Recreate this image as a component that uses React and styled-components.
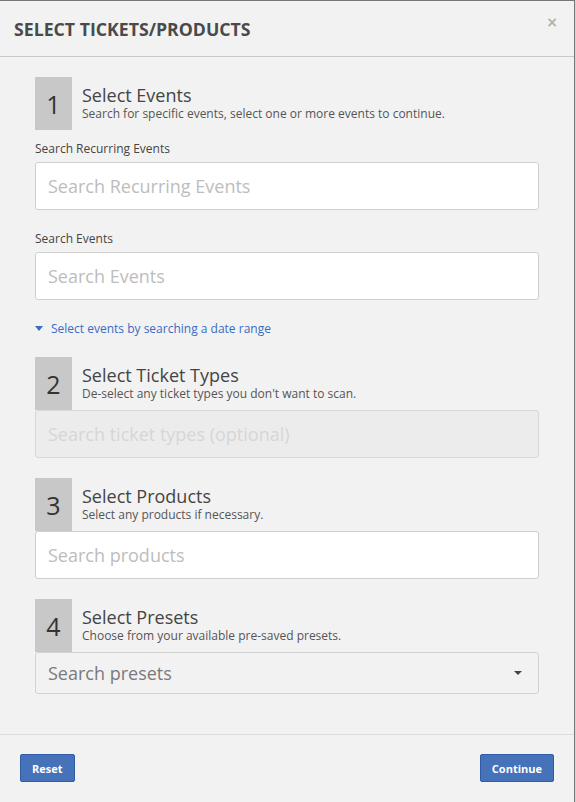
import React from "react";
import styled, { createGlobalStyle } from "styled-components";

const GlobalStyle = createGlobalStyle`
  html, body {
    margin: 0;
    padding: 0;
    background: #d4d4d4;
    font-family: "Open Sans", "Liberation Sans", sans-serif;
  }
  * {
    box-sizing: border-box;
  }
`;

const Modal = styled.div`
  width: 575px;
  min-height: 802px;
  background: #f2f2f2;
  border-top: 1px solid #777;
  border-right: 1px solid #777;
  display: flex;
  flex-direction: column;
`;

const Header = styled.div`
  height: 56px;
  padding: 0 14px;
  border-bottom: 1px solid #c9c9c9;
  display: flex;
  align-items: center;
  justify-content: space-between;
`;

const Title = styled.h4`
  margin: 0;
  font-size: 17.7px;
  font-weight: 700;
  color: #4a4a4a;
  text-transform: uppercase;
`;

const Close = styled.button`
  align-self: flex-start;
  margin-top: 14px;
  margin-right: 2px;
  padding: 0;
  border: none;
  background: none;
  font-family: "DejaVu Sans", sans-serif;
  font-size: 14px;
  font-weight: 700;
  color: #b0b0b0;
  line-height: 1;
  cursor: pointer;
`;

const Body = styled.div`
  flex: 1;
  padding: 20px 35px 40px;
`;

const StepHeader = styled.div`
  display: flex;
  height: 53px;
  margin-bottom: ${(p) => (p.$gap ? "10px" : "0")};
`;

const StepNumber = styled.div`
  width: 37px;
  background: #c8c8c8;
  color: #333;
  font-size: 25px;
  display: flex;
  align-items: center;
  justify-content: center;
`;

const StepText = styled.div`
  padding: 7px 0 0 10px;
`;

const StepTitle = styled.div`
  font-size: 18px;
  line-height: 22px;
  color: #444;
`;

const StepSub = styled.div`
  font-size: 12px;
  line-height: 16px;
  color: #555;
`;

const Label = styled.label`
  display: block;
  font-size: 12px;
  line-height: 17px;
  color: #444;
  margin-bottom: 5px;
`;

const Field = styled.div`
  margin-bottom: ${(p) => p.$mb || "0"};
`;

const Input = styled.input`
  display: block;
  width: 100%;
  height: 48px;
  padding: 0 12px;
  font-family: inherit;
  font-size: 18px;
  color: #333;
  background: ${(p) => (p.disabled ? "#ececec" : "#fff")};
  border: 1px solid ${(p) => (p.disabled ? "#d8d8d8" : "#cfcfcf")};
  border-radius: 3px;
  outline: none;

  &::placeholder {
    color: ${(p) => (p.disabled ? "#d6d6d6" : "#bdbdbd")};
  }
`;

const SelectBox = styled.div`
  height: 42px;
  padding: 0 12px;
  display: flex;
  align-items: center;
  justify-content: space-between;
  border: 1px solid #d2d2d2;
  border-radius: 3px;
  font-size: 18px;
  color: #7a7a7a;
`;

const Caret = styled.span`
  width: 0;
  height: 0;
  margin-right: 4px;
  border-left: 4px solid transparent;
  border-right: 4px solid transparent;
  border-top: 4px solid #444;
`;

const Toggle = styled.a`
  display: flex;
  align-items: center;
  gap: 8px;
  margin: 20px 0;
  font-size: 12px;
  line-height: 17px;
  color: #3a6cc4;
  cursor: pointer;
`;

const BlueCaret = styled.span`
  width: 0;
  height: 0;
  border-left: 4px solid transparent;
  border-right: 4px solid transparent;
  border-top: 5px solid #3a6cc4;
`;

const Step = styled.div`
  margin-bottom: ${(p) => p.$mb || "20px"};
`;

const Footer = styled.div`
  border-top: 1px solid #dcdcdc;
  padding: 19px 20px 20px;
  display: flex;
  justify-content: space-between;
`;

const Button = styled.button`
  height: 28px;
  padding: 0 11px;
  font-family: inherit;
  font-size: 11px;
  font-weight: 700;
  color: #fff;
  background: #4572b9;
  border: 1px solid #2f5ca6;
  border-radius: 2px;
  cursor: pointer;
`;

const StepHead = ({ n, title, sub, gap }) => (
  <StepHeader $gap={gap}>
    <StepNumber>{n}</StepNumber>
    <StepText>
      <StepTitle>{title}</StepTitle>
      <StepSub>{sub}</StepSub>
    </StepText>
  </StepHeader>
);

export default function App() {
  return (
    <>
      <GlobalStyle />
      <Modal>
        <Header>
          <Title>Select Tickets/Products</Title>
          <Close aria-label="Close">×</Close>
        </Header>
        <Body>
          <StepHead
            n="1"
            title="Select Events"
            sub="Search for specific events, select one or more events to continue."
            gap
          />
          <Field $mb="20px">
            <Label>Search Recurring Events</Label>
            <Input placeholder="Search Recurring Events" />
          </Field>
          <Field>
            <Label>Search Events</Label>
            <Input placeholder="Search Events" />
          </Field>
          <Toggle>
            <BlueCaret />
            Select events by searching a date range
          </Toggle>

          <Step>
            <StepHead
              n="2"
              title="Select Ticket Types"
              sub="De-select any ticket types you don't want to scan."
            />
            <Input disabled placeholder="Search ticket types (optional)" />
          </Step>

          <Step>
            <StepHead
              n="3"
              title="Select Products"
              sub="Select any products if necessary."
            />
            <Input placeholder="Search products" />
          </Step>

          <Step $mb="0">
            <StepHead
              n="4"
              title="Select Presets"
              sub="Choose from your available pre-saved presets."
            />
            <SelectBox>
              Search presets
              <Caret />
            </SelectBox>
          </Step>
        </Body>
        <Footer>
          <Button>Reset</Button>
          <Button>Continue</Button>
        </Footer>
      </Modal>
    </>
  );
}
